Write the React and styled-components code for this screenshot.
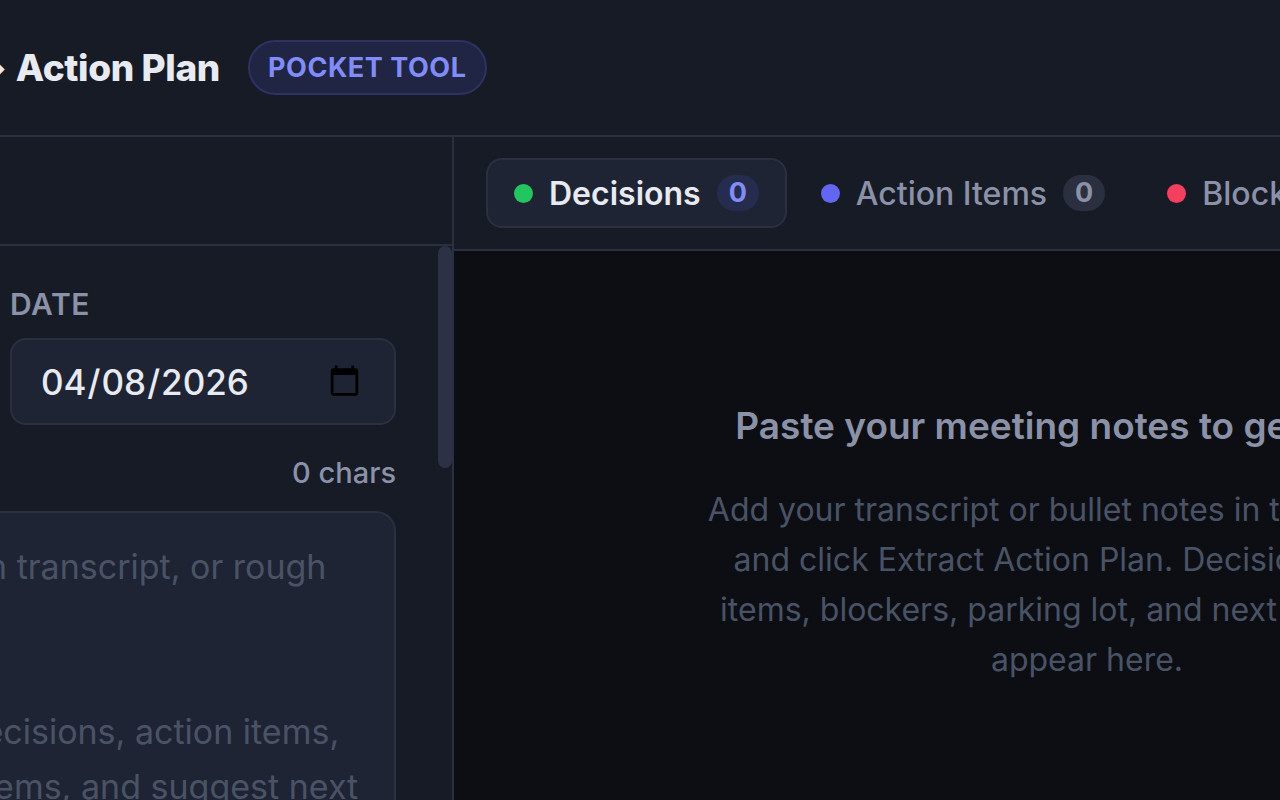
import { useState } from "react";
import styled, { createGlobalStyle, ThemeProvider } from "styled-components";

const theme = {
  colors: {
    bg: "#0c0e13",
    surface: "#171b25",
    field: "#1e2433",
    border: "#2a3040",
    thumb: "#2c3145",
    text: "#e8eaf2",
    muted: "#8b92a8",
    dim: "#4a5366",
    accent: "#818cf8",
    green: "#22c55e",
    indigo: "#6366f1",
    red: "#f43f5e",
  },
};

const tabs = [
  { id: "decisions", label: "Decisions", color: "green" },
  { id: "actions", label: "Action Items", color: "indigo" },
  { id: "blockers", label: "Blockers", color: "red" },
];

const placeholder = `Enter your notes, Zoom transcript, or rough
notes here.

This tool will extract decisions, action items,
blockers, parking-lot items, and suggest next
steps.`;

export default function App() {
  const [active, setActive] = useState("decisions");
  const [date, setDate] = useState("2026-04-08");
  const [notes, setNotes] = useState("");

  return (
    <ThemeProvider theme={theme}>
      <GlobalStyle />
      <Page>
        <Shell>
          <Header>
            <Title>Meeting Notes → Action Plan</Title>
            <Pill>POCKET TOOL</Pill>
          </Header>
          <Main>
            <Sidebar>
              <SidebarTop />
              <SidebarBody>
                <Form>
                  <FieldRow>
                    <Field>
                      <Label htmlFor="meeting">TITLE</Label>
                      <Input id="meeting" type="text" />
                    </Field>
                    <Field>
                      <Label htmlFor="date">DATE</Label>
                      <Input
                        id="date"
                        type="date"
                        value={date}
                        onChange={(e) => setDate(e.target.value)}
                      />
                    </Field>
                  </FieldRow>
                  <NotesHead>
                    <Label htmlFor="notes">NOTES</Label>
                    <Chars>{notes.length} chars</Chars>
                  </NotesHead>
                  <Notes
                    id="notes"
                    placeholder={placeholder}
                    value={notes}
                    onChange={(e) => setNotes(e.target.value)}
                  />
                </Form>
                <Rail>
                  <Thumb />
                </Rail>
              </SidebarBody>
            </Sidebar>
            <Results>
              <TabBar>
                {tabs.map((tab) => (
                  <Tab
                    key={tab.id}
                    type="button"
                    $active={tab.id === active}
                    onClick={() => setActive(tab.id)}
                  >
                    <Dot $color={tab.color} />
                    {tab.label}
                    <Count $active={tab.id === active}>0</Count>
                  </Tab>
                ))}
              </TabBar>
              <Empty>
                <h2>Paste your meeting notes to get started</h2>
                <p>
                  Add your transcript or bullet notes in the left panel and click Extract
                  Action Plan. Decisions, action items, blockers, parking lot, and next
                  actions will appear here.
                </p>
              </Empty>
            </Results>
          </Main>
        </Shell>
      </Page>
    </ThemeProvider>
  );
}

const GlobalStyle = createGlobalStyle`
  * {
    box-sizing: border-box;
    margin: 0;
    padding: 0;
  }

  body {
    background: ${({ theme }) => theme.colors.bg};
    color: ${({ theme }) => theme.colors.text};
    font-family: Inter, "Liberation Sans", sans-serif;
  }

  button, input, textarea {
    font-family: inherit;
  }
`;

const Page = styled.div`
  height: 100vh;
  overflow: hidden;
`;

/* the workspace is wider than the window on both sides */
const Shell = styled.div`
  height: 100%;
  margin: 0 -440px;
  display: flex;
  flex-direction: column;
`;

const Header = styled.header`
  display: flex;
  align-items: center;
  gap: 28px;
  padding: 40px;
  background: ${({ theme }) => theme.colors.surface};
  border-bottom: 2px solid ${({ theme }) => theme.colors.border};
`;

const Title = styled.h1`
  min-width: 620px;
  font-size: 37px;
  line-height: 55px;
  font-weight: 800;
  letter-spacing: -0.01em;
  text-align: right;
  white-space: nowrap;
`;

const Pill = styled.span`
  padding: 0 18px;
  border: 2px solid #2f3163;
  border-radius: 28px;
  background: #1f2542;
  color: ${({ theme }) => theme.colors.accent};
  font-size: 27px;
  line-height: 51px;
  font-weight: 700;
  letter-spacing: 0.02em;
`;

const Main = styled.main`
  flex: 1;
  min-height: 0;
  display: flex;
`;

const Sidebar = styled.aside`
  flex: 0 0 894px;
  display: flex;
  flex-direction: column;
  background: ${({ theme }) => theme.colors.surface};
  border-right: 2px solid ${({ theme }) => theme.colors.border};
`;

const SidebarTop = styled.div`
  flex: 0 0 109px;
  border-bottom: 2px solid ${({ theme }) => theme.colors.border};
`;

const SidebarBody = styled.div`
  flex: 1;
  min-height: 0;
  display: flex;
`;

const Form = styled.form`
  flex: 1;
  min-width: 0;
  display: flex;
  flex-direction: column;
  padding: 40px 42px 0 40px;
`;

const FieldRow = styled.div`
  display: grid;
  grid-template-columns: 1fr 1fr;
  gap: 24px;
`;

const Field = styled.div`
  display: flex;
  flex-direction: column;
  gap: 16px;
`;

const Label = styled.label`
  color: ${({ theme }) => theme.colors.muted};
  font-size: 30px;
  line-height: 36px;
  font-weight: 600;
  letter-spacing: 0.02em;
`;

const Input = styled.input`
  width: 100%;
  height: 87px;
  padding: 0 30px 0 28px;
  border: 2px solid ${({ theme }) => theme.colors.border};
  border-radius: 16px;
  background: ${({ theme }) => theme.colors.field};
  color: ${({ theme }) => theme.colors.text};
  font-size: 35px;
  font-weight: 500;
`;

const NotesHead = styled.div`
  display: flex;
  justify-content: space-between;
  padding: 30px 0 20px;
`;

const Chars = styled.span`
  color: ${({ theme }) => theme.colors.muted};
  font-size: 29px;
  line-height: 36px;
  font-weight: 500;
`;

const Notes = styled.textarea`
  flex: 1;
  width: 100%;
  padding: 26px 30px 0;
  border: 2px solid ${({ theme }) => theme.colors.border};
  border-bottom: 0;
  border-radius: 20px 20px 0 0;
  background: ${({ theme }) => theme.colors.field};
  color: ${({ theme }) => theme.colors.text};
  font-size: 34px;
  line-height: 55px;
  resize: none;
  overflow: hidden;

  &::placeholder {
    color: ${({ theme }) => theme.colors.dim};
    white-space: pre;
  }
`;

const Rail = styled.div`
  flex: 0 0 14px;
`;

const Thumb = styled.div`
  height: 40%;
  border-radius: 7px;
  background: ${({ theme }) => theme.colors.thumb};
`;

const Results = styled.section`
  flex: 1;
  min-width: 0;
`;

const TabBar = styled.nav`
  display: flex;
  gap: 6px;
  padding: 21px 32px;
  background: ${({ theme }) => theme.colors.surface};
  border-bottom: 2px solid ${({ theme }) => theme.colors.border};
`;

const Tab = styled.button`
  display: flex;
  align-items: center;
  gap: 16px;
  height: 70px;
  padding: 0 26px;
  border: 2px solid ${({ theme, $active }) => ($active ? theme.colors.border : "transparent")};
  border-radius: 16px;
  background: ${({ theme, $active }) => ($active ? theme.colors.field : "transparent")};
  color: ${({ theme, $active }) => ($active ? theme.colors.text : theme.colors.muted)};
  font-size: 32px;
  font-weight: ${({ $active }) => ($active ? 600 : 500)};
  white-space: nowrap;
  cursor: pointer;
`;

const Dot = styled.span`
  width: 19px;
  height: 19px;
  border-radius: 50%;
  background: ${({ theme, $color }) => theme.colors[$color]};
`;

const Count = styled.span`
  padding: 0 12px;
  border-radius: 18px;
  background: ${({ $active }) => ($active ? "#262c4d" : "#2a3040")};
  color: ${({ theme, $active }) => ($active ? theme.colors.accent : theme.colors.muted)};
  font-size: 27px;
  line-height: 36px;
  font-weight: 700;
`;

const Empty = styled.div`
  display: flex;
  flex-direction: column;
  align-items: center;
  gap: 34px;
  padding-top: 150px;
  text-align: center;

  h2 {
    color: ${({ theme }) => theme.colors.muted};
    font-size: 37px;
    line-height: 50px;
    font-weight: 600;
  }

  p {
    max-width: 760px;
    color: ${({ theme }) => theme.colors.dim};
    font-size: 32px;
    line-height: 50px;
  }
`;
